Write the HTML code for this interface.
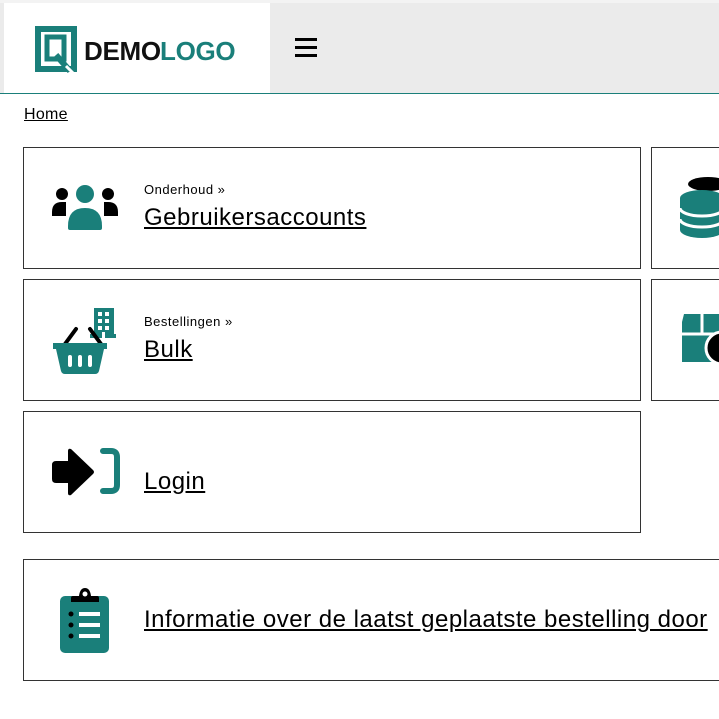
<!DOCTYPE html>
<html><head><meta charset="utf-8"><style>
*{box-sizing:border-box;margin:0;padding:0}
body{width:719px;height:719px;overflow:hidden;background:#fff;font-family:"Liberation Sans",sans-serif;color:#000;position:relative}
.hdr{position:absolute;left:0;top:0;width:719px;height:94px;background:#ebebeb;border-top:3px solid #f3f3f3;border-bottom:1px solid #1a7f7a}
.logo{position:absolute;left:4px;top:0;width:266px;height:90px;background:#fff}
.bc{position:absolute;left:24px;top:106px;font-size:16px;text-decoration:underline;letter-spacing:0.3px}
.card{position:absolute;border:1px solid #333;background:#fff;height:122px}
.sm{position:absolute;left:120px;top:34px;font-size:13px;letter-spacing:0.5px}
.big{position:absolute;left:120px;top:56px;font-size:24px;text-decoration:underline;white-space:nowrap;letter-spacing:0.5px}
</style></head><body>
<div class="hdr">
 <div class="logo">
  <svg width="260" height="90" viewBox="0 0 260 90" style="position:absolute;left:0;top:0">
   <path d="M34 26h36v40h-36z" fill="none" stroke="#1a7f7a" stroke-width="6"/>
   <path d="M43 34h17v22h-17z" fill="none" stroke="#1a7f7a" stroke-width="5"/>
   <path d="M52 52l14 16" stroke="#1a7f7a" stroke-width="6"/>
   <path d="M62 63l8 8" stroke="#fff" stroke-width="3"/>
   <text x="80" y="57" font-family="Liberation Sans" font-weight="bold" font-size="26" fill="#111" letter-spacing="-0.3">DEMO</text>
   <text x="156" y="57" font-family="Liberation Sans" font-weight="bold" font-size="26" fill="#1a7f7a" letter-spacing="-0.3">LOGO</text>
  </svg>
 </div>
 <div style="position:absolute;left:295px;top:35px;width:22px">
  <div style="height:3px;background:#000;margin-bottom:5px"></div>
  <div style="height:3px;background:#000;margin-bottom:5px"></div>
  <div style="height:3px;background:#000"></div>
 </div>
</div>
<div class="bc">Home</div>

<div class="card" style="left:23px;top:147px;width:618px">
 <svg width="66" height="52" viewBox="0 0 66 52" style="position:absolute;left:28px;top:36px">
  <circle cx="10" cy="10" r="6" fill="#000"/><circle cx="56" cy="10" r="6" fill="#000"/>
  <path d="M0 28q0-10 10-10h4v14h-14z" fill="#000"/><path d="M66 28q0-10-10-10h-4v14h14z" fill="#000"/>
  <circle cx="33" cy="10" r="9" fill="#1a7f7a"/>
  <path d="M16 42q0-18 17-18q17 0 17 18v2q0 2-2 2h-30q-2 0-2-2z" fill="#1a7f7a"/>
 </svg>
 <div class="sm">Onderhoud »</div><div class="big">Gebruikersaccounts</div>
</div>
<div class="card" style="left:651px;top:147px;width:80px">
 <svg width="60" height="70" style="position:absolute;left:26px;top:28px"><ellipse cx="30" cy="8" rx="20" ry="7" fill="#000"/><path d="M2 22a22 8 0 0 1 44 0v32a22 8 0 0 1-44 0z" fill="#1a7f7a"/><path d="M2 32a22 8 0 0 0 44 0M2 43a22 8 0 0 0 44 0" stroke="#fff" stroke-width="3" fill="none"/></svg>
</div>

<div class="card" style="left:23px;top:279px;width:618px">
 <svg width="90" height="68" style="position:absolute;left:27px;top:27px">
  <rect x="43" y="1" width="20" height="30" fill="#1a7f7a"/>
  <rect x="39" y="27" width="26" height="4" fill="#1a7f7a"/>
  <g fill="#fff"><rect x="47" y="5" width="4" height="4"/><rect x="54" y="5" width="4" height="4"/><rect x="47" y="12" width="4" height="4"/><rect x="54" y="12" width="4" height="4"/><rect x="47" y="19" width="4" height="4"/><rect x="54" y="19" width="4" height="4"/><rect x="51" y="25" width="3" height="6"/></g>
  <path d="M14 37l11-15M50 37l-11-15" stroke="#000" stroke-width="4" stroke-linecap="round"/>
  <path d="M2 36h54v6h-3l-5 22q-1 3-4 3h-30q-3 0-4-3l-5-22h-3z" fill="#1a7f7a"/>
  <g fill="#fff"><rect x="17" y="48" width="4" height="12" rx="2"/><rect x="27" y="48" width="4" height="12" rx="2"/><rect x="37" y="48" width="4" height="12" rx="2"/></g>
 </svg>
 <div class="sm">Bestellingen »</div><div class="big">Bulk</div>
</div>
<div class="card" style="left:651px;top:279px;width:80px">
 <svg width="60" height="70" style="position:absolute;left:26px;top:30px"><path d="M6 4h36l4 6v42h-42v-40z" fill="#1a7f7a"/><path d="M4 24h40M24 4v20" stroke="#fff" stroke-width="3"/><circle cx="44" cy="38" r="16" fill="#000" stroke="#fff" stroke-width="3"/></svg>
</div>

<div class="card" style="left:23px;top:411px;width:618px">
 <svg width="70" height="52" style="position:absolute;left:27px;top:36px">
  <path d="M1 17q0-4 4-4h12v-10q0-3 3-2l22 21q2 2 0 4l-22 21q-3 1-3-2v-10h-12q-4 0-4-4z" fill="#000"/>
  <path d="M52 3h8q6 0 6 6v28q0 6-6 6h-8" stroke="#1a7f7a" stroke-width="6" fill="none" stroke-linecap="round"/>
 </svg>
 <div class="big" style="top:56px">Login</div>
</div>

<div class="card" style="left:23px;top:559px;width:720px">
 <svg width="52" height="68" style="position:absolute;left:35px;top:27px">
  <rect x="1" y="9" width="49" height="57" rx="5" fill="#1a7f7a"/>
  <path d="M12 15v-4q0-2 2-2h6q1-8 6-8q5 0 6 8h6q2 0 2 2v4z" fill="#000"/><circle cx="26" cy="7" r="2.5" fill="#fff"/>
  <g fill="#000"><circle cx="12" cy="27" r="2.5"/><circle cx="12" cy="38" r="2.5"/><circle cx="12" cy="49" r="2.5"/></g>
  <g fill="#fff"><rect x="20" y="25" width="21" height="4"/><rect x="20" y="36" width="21" height="4"/><rect x="20" y="47" width="21" height="4"/></g>
 </svg>
 <div class="big" style="top:46px">Informatie over de laatst geplaatste bestelling door</div>
</div>
</body></html>
